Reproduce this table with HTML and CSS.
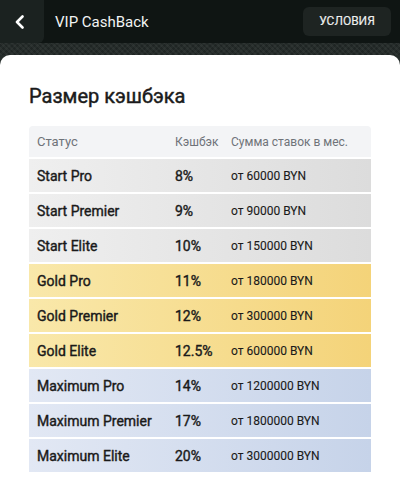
FILE: index.html
```html
<!DOCTYPE html>
<html lang="ru">
<head>
<meta charset="utf-8">
<link rel="stylesheet" href="styles.css">
</head>
<body>
<header class="topbar">
  <button class="back" aria-label="Назад">
    <svg width="12" height="14" viewBox="0 0 12 14"><path d="M8.5 1.5 L3 7 L8.5 12.5" fill="none" stroke="#fff" stroke-width="2.6" stroke-linecap="round" stroke-linejoin="round"/></svg>
  </button>
  <div class="title">VIP CashBack</div>
  <button class="terms">УСЛОВИЯ</button>
</header>
<div class="strip"></div>
<main class="card">
  <h1 class="heading">Размер кэшбэка</h1>
  <div class="table">
    <div class="row head"><span>Статус</span><span>Кэшбэк</span><span>Сумма ставок в мес.</span></div>
    <div class="row start"><span class="st">Start Pro</span><span class="pc">8%</span><span class="sum">от 60000 BYN</span></div>
    <div class="row start"><span class="st">Start Premier</span><span class="pc">9%</span><span class="sum">от 90000 BYN</span></div>
    <div class="row start"><span class="st">Start Elite</span><span class="pc">10%</span><span class="sum">от 150000 BYN</span></div>
    <div class="row gold"><span class="st">Gold Pro</span><span class="pc">11%</span><span class="sum">от 180000 BYN</span></div>
    <div class="row gold"><span class="st">Gold Premier</span><span class="pc">12%</span><span class="sum">от 300000 BYN</span></div>
    <div class="row gold"><span class="st">Gold Elite</span><span class="pc">12.5%</span><span class="sum">от 600000 BYN</span></div>
    <div class="row max"><span class="st">Maximum Pro</span><span class="pc">14%</span><span class="sum">от 1200000 BYN</span></div>
    <div class="row max"><span class="st">Maximum Premier</span><span class="pc">17%</span><span class="sum">от 1800000 BYN</span></div>
    <div class="row max"><span class="st">Maximum Elite</span><span class="pc">20%</span><span class="sum">от 3000000 BYN</span></div>
  </div>
</main>
</body>
</html>
```
FILE: styles.css
```css
* { box-sizing: border-box; }
html, body { margin: 0; padding: 0; }
body {
  font-family: Roboto, "Noto Sans", sans-serif;
  background: #262d2b;
  width: 400px;
  height: 483px;
  overflow: hidden;
}
.topbar {
  height: 43px;
  background: #0f1513;
  display: flex;
  align-items: center;
}
.back {
  width: 44px;
  height: 43px;
  border: 0;
  padding: 0;
  background: #1b2220;
  border-bottom-right-radius: 6px;
  display: flex;
  align-items: center;
  justify-content: center;
  padding-right: 4px;
}
.title {
  color: #f2f4f3;
  font-size: 15px;
  margin-left: 11px;
  flex: 1;
}
.terms {
  margin-right: 9px;
  width: 88px;
  height: 29px;
  border: 0;
  border-radius: 6px;
  background: #1e2422;
  color: #eef0ef;
  font-family: Roboto, sans-serif;
  font-size: 12px;
  font-weight: 400;
  letter-spacing: 0;
  -webkit-text-stroke: 0.15px #eef0ef;
  margin-top: -1px;
}
.strip {
  height: 12px;
  background-color: #252c2a;
  background-image: repeating-linear-gradient(45deg, rgba(255,255,255,0.04) 0 2px, transparent 2px 4px),
                    repeating-linear-gradient(-45deg, rgba(0,0,0,0.15) 0 2px, transparent 2px 4px);
}
.card {
  background: #fff;
  border-radius: 10px 10px 0 0;
  padding: 29px 29px 20px;
  height: 428px;
}
.heading {
  margin: 0 0 18px;
  font-size: 20px;
  line-height: 24px;
  font-weight: 400;
  -webkit-text-stroke: 0.45px #1b1b1b;
  color: #1b1b1b;
}
.table {
  display: flex;
  flex-direction: column;
  gap: 2px;
}
.row {
  display: grid;
  grid-template-columns: 138px 56px 1fr;
  align-items: center;
  height: 33px;
  padding-left: 8px;
  color: #1a1a1a;
}
.row.head {
  height: 31px;
  background: #f3f4f6;
  border-radius: 4px 4px 0 0;
  color: #6f7379;
  font-size: 12px;
}
.row.head span:first-child { font-size: 13px; }
.st, .pc {
  font-size: 14px;
  font-weight: 400;
  -webkit-text-stroke: 0.4px #1a1a1a;
}
.sum { font-size: 12px; -webkit-text-stroke: 0.1px #1a1a1a; }
.start { background: linear-gradient(90deg, #efefef 0%, #dcdcdc 100%); }
.gold { background: linear-gradient(90deg, #f9e8aa 0%, #f4d379 100%); }
.max { background: linear-gradient(90deg, #e2e8f4 0%, #c6d3e9 100%); }
```
